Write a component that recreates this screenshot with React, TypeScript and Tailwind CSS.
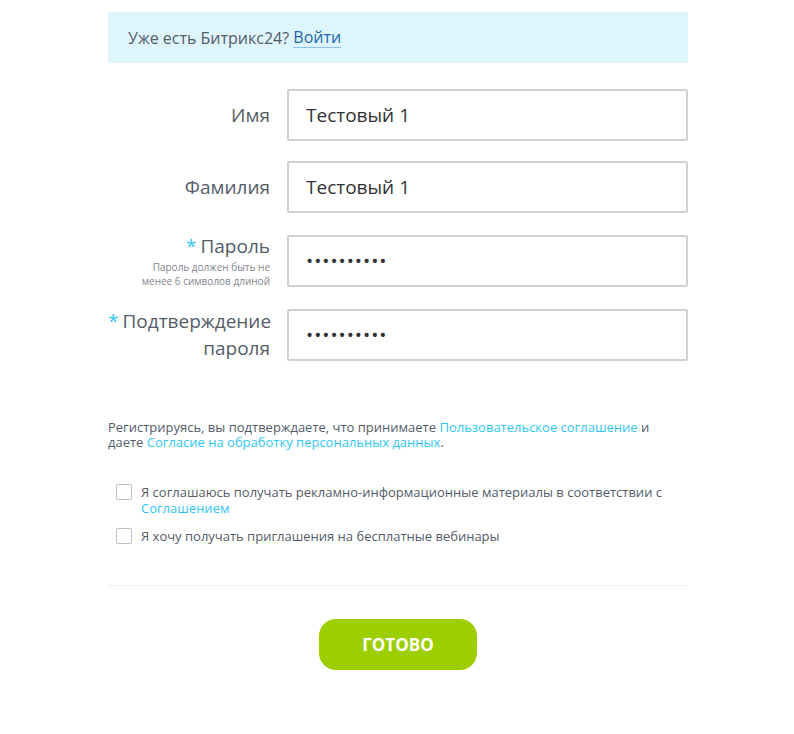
import { useState } from 'react'

const FONT = { fontFamily: '"Open Sans", "Liberation Sans", sans-serif' }

function Field({ label, required, hint, value, type = 'text' }: { label: React.ReactNode; required?: boolean; hint?: React.ReactNode; value: string; type?: string }) {
  return (
    <div className="flex items-center">
      <div className="w-[162px] text-right">
        <div className="text-[19px] leading-[27px] text-[#535c69]">
          {required && <span className="text-[#2fc6f6] mr-1">*</span>}
          {label}
        </div>
        {hint && <div className="text-[10px] leading-[14px] text-[#80868e]">{hint}</div>}
      </div>
      <input
        type={type}
        defaultValue={value}
        className="ml-[17px] w-[401px] h-[52px] border-2 border-[#cdd2d6] rounded-[2px] px-[17px] text-[19px] text-[#333] outline-none"
        style={type === 'password' ? { ...FONT, letterSpacing: '1px' } : FONT}
      />
    </div>
  )
}

function Check({ children }: { children: React.ReactNode }) {
  const [on, setOn] = useState(false)
  return (
    <label className="flex items-start gap-[9px] pl-2 cursor-pointer">
      <span
        onClick={() => setOn(!on)}
        className={`w-4 h-4 shrink-0 rounded-[2px] border ${on ? 'border-[#2fc6f6] bg-[#2fc6f6]' : 'border-[#b9bfc4] bg-white'}`}
      />
      <span className="text-[13px] leading-4 text-[#535c69]">{children}</span>
    </label>
  )
}

export default function App() {
  return (
    <div className="min-h-screen bg-white" style={FONT}>
      <div className="w-[580px] ml-[108px] pt-3">
        {/* banner */}
        <div className="h-[51px] bg-[#dff5fc] flex items-center px-5 text-[16px] text-[#535c69]">
          Уже есть Битрикс24?&nbsp;
          <a href="#" className="text-[#2067b0] border-b border-[#8fc3e8] leading-[20px]">Войти</a>
        </div>

        {/* fields */}
        <div className="mt-[26px] flex flex-col gap-5">
          <Field label="Имя" value="Тестовый 1" />
          <Field label="Фамилия" value="Тестовый 1" />
          <Field
            label="Пароль"
            required
            value="1234567890"
            type="password"
            hint={<>Пароль должен быть не<br />менее 6 символов длиной</>}
          />
          <Field label={<>Подтверждение<br />пароля</>} required value="1234567890" type="password" />
        </div>

        {/* agreement */}
        <p className="mt-[58px] text-[13px] leading-[15px] text-[#535c69]">
          Регистрируясь, вы подтверждаете, что принимаете <a href="#" className="text-[#2fc6f6]">Пользовательское соглашение</a> и
          <br />
          даете <a href="#" className="text-[#2fc6f6]">Согласие на обработку персональных данных</a>.
        </p>

        <div className="mt-[34px] flex flex-col gap-3">
          <Check>
            Я соглашаюсь получать рекламно-информационные материалы в соответствии с<br />
            <a href="#" className="text-[#2fc6f6]">Соглашением</a>
          </Check>
          <Check>Я хочу получать приглашения на бесплатные вебинары</Check>
        </div>

        <div className="mt-[41px] border-t border-[#eef0f2]" />

        <div className="flex justify-center mt-[33px]">
          <button className="w-[158px] h-[51px] rounded-[17px] bg-[#9dcf00] text-white font-bold text-[17px] uppercase">
            Готово
          </button>
        </div>
      </div>
    </div>
  )
}
